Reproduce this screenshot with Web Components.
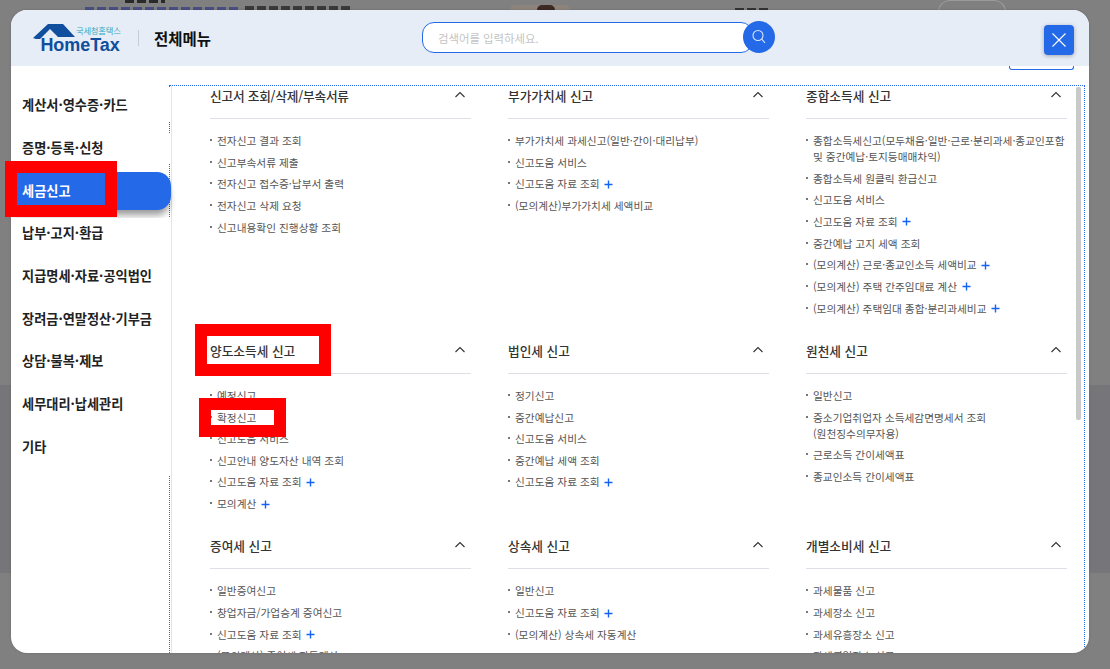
<!DOCTYPE html>
<html lang="ko"><head><meta charset="utf-8"><title>전체메뉴</title>
<style>
html,body{margin:0;padding:0;height:669px;overflow:hidden;background:#808080}
body{font-family:"Noto Sans CJK KR","Noto Sans",sans-serif}
</style></head><body>
<ht-app>
<ht-section slot="s" heading="신고서 조회/삭제/부속서류" style="--ls:-.22px"><ht-item>전자신고 결과 조회</ht-item><ht-item>신고부속서류 제출</ht-item><ht-item>전자신고 접수증·납부서 출력</ht-item><ht-item>전자신고 삭제 요청</ht-item><ht-item>신고내용확인 진행상황 조회</ht-item></ht-section>
<ht-section slot="s" heading="부가가치세 신고"><ht-item>부가가치세 과세신고(일반·간이·대리납부)</ht-item><ht-item>신고도움 서비스</ht-item><ht-item plus>신고도움 자료 조회</ht-item><ht-item>(모의계산)부가가치세 세액비교</ht-item></ht-section>
<ht-section slot="s" heading="종합소득세 신고"><ht-item>종합소득세신고(모두채움·일반·근로·분리과세·종교인포함<br>및 중간예납·토지등매매차익)</ht-item><ht-item>종합소득세 원클릭 환급신고</ht-item><ht-item>신고도움 서비스</ht-item><ht-item plus>신고도움 자료 조회</ht-item><ht-item>중간예납 고지 세액 조회</ht-item><ht-item plus>(모의계산) 근로·종교인소득 세액비교</ht-item><ht-item plus>(모의계산) 주택 간주임대료 계산</ht-item><ht-item plus>(모의계산) 주택임대 종합·분리과세비교</ht-item></ht-section>
<ht-section slot="s" heading="양도소득세 신고"><ht-item>예정신고</ht-item><ht-item>확정신고</ht-item><ht-item>신고도움 서비스</ht-item><ht-item>신고안내 양도자산 내역 조회</ht-item><ht-item plus>신고도움 자료 조회</ht-item><ht-item plus>모의계산</ht-item></ht-section>
<ht-section slot="s" heading="법인세 신고"><ht-item>정기신고</ht-item><ht-item>중간예납신고</ht-item><ht-item>신고도움 서비스</ht-item><ht-item>중간예납 세액 조회</ht-item><ht-item plus>신고도움 자료 조회</ht-item></ht-section>
<ht-section slot="s" heading="원천세 신고"><ht-item>일반신고</ht-item><ht-item>중소기업취업자 소득세감면명세서 조회<br>(원천징수의무자용)</ht-item><ht-item>근로소득 간이세액표</ht-item><ht-item>종교인소득 간이세액표</ht-item></ht-section>
<ht-section slot="s" heading="증여세 신고"><ht-item>일반증여신고</ht-item><ht-item>창업자금/가업승계 증여신고</ht-item><ht-item plus>신고도움 자료 조회</ht-item><ht-item>(모의계산) 증여세 자동계산</ht-item></ht-section>
<ht-section slot="s" heading="상속세 신고"><ht-item>일반신고</ht-item><ht-item plus>신고도움 자료 조회</ht-item><ht-item>(모의계산) 상속세 자동계산</ht-item></ht-section>
<ht-section slot="s" heading="개별소비세 신고"><ht-item>과세물품 신고</ht-item><ht-item>과세장소 신고</ht-item><ht-item>과세유흥장소 신고</ht-item><ht-item>과세영업장소 신고</ht-item></ht-section>
</ht-app>
<script>
class HtItem extends HTMLElement{
 constructor(){super();this.attachShadow({mode:'open'}).innerHTML=`<style>
 :host{display:block;position:relative;padding-left:7px;font-size:10.7px;line-height:16px;color:#555;margin-bottom:5.67px;white-space:nowrap}
 :host::before{content:"";position:absolute;left:0;top:6px;width:2px;height:2px;background:#777}
 svg{display:none;width:9px;height:9px;margin-left:4.5px;vertical-align:-.5px}
 :host([plus]) svg{display:inline-block}
 </style><slot></slot><svg viewBox="0 0 9 9"><path d="M4.5 .5v8M.5 4.5h8" stroke="#1462f5" stroke-width="1.4" fill="none"/></svg>`;}
}
customElements.define('ht-item',HtItem);
class HtSection extends HTMLElement{
 constructor(){super();this.attachShadow({mode:'open'}).innerHTML=`<style>
 :host{display:block;min-width:0}
 header{height:33px;border-bottom:1px solid #dfdfe8;display:flex;justify-content:space-between;align-items:flex-start}
 h3{margin:1px 0 0;font-size:12.7px;letter-spacing:var(--ls,0);line-height:20px;font-weight:500;color:#333}
 svg{width:12px;height:7px;margin:6px 5px 0 0}
 .list{padding-top:14px}
 </style><header><h3></h3><svg viewBox="0 0 12 7"><path d="M1.5 6L6 1.5 10.5 6" fill="none" stroke="#333" stroke-width="1.1"/></svg></header><div class="list"><slot></slot></div>`;
 this.shadowRoot.querySelector('h3').textContent=this.getAttribute('heading');}
}
customElements.define('ht-section',HtSection);
class HtNav extends HTMLElement{
 constructor(){super();const t=s=>`<div class="i">${s}</div>`;this.attachShadow({mode:'open'}).innerHTML=`<style>
 :host{display:block;width:159px;flex:none;position:relative;z-index:2;padding-top:22px;font-size:13.2px;font-weight:700;color:#222}
 .i{padding-left:11px;background:#fff;height:33px;line-height:33px;white-space:nowrap}
 .a{height:38px;margin:9px -1px 8px 0;background:#2469e8;color:#fff;line-height:37px;border-radius:0 14px 14px 0;box-shadow:0 7px 7px -2px rgba(0,0,0,.4);padding-left:11px}
 .g1{height:12px;background:transparent}.w{background:#fff}
 .w .i{height:42.8px;line-height:29px}
 .first{height:33px;line-height:34px}.sec{height:30px;line-height:30px}
 </style>
 <div class="i first">계산서·영수증·카드</div><div class="g1"></div><div class="i sec">증명·등록·신청</div>
 <div class="a">세금신고</div>
 <div class="w">${['납부·고지·환급','지급명세·자료·공익법인','장려금·연말정산·기부금','상담·불복·제보','세무대리·납세관리','기타'].map(t).join('')}</div>`;}
}
customElements.define('ht-nav',HtNav);
class HtHeader extends HTMLElement{
 constructor(){super();this.attachShadow({mode:'open'}).innerHTML=`<style>
 :host{display:flex;align-items:center;height:56px;flex:none;background:#e6edf7;position:relative;z-index:3}
 .logo{position:relative;width:90px;height:30px;margin-left:21px;flex:none}
 .logo svg{position:absolute;left:0;top:0;width:50px;height:27px}
 .small{position:absolute;left:44px;top:2px;font-size:8.3px;line-height:10px;color:#38a8c0;letter-spacing:-.2px;white-space:nowrap}
 .big{position:absolute;left:8.4px;top:11px;font:700 18px/22px "Liberation Sans",sans-serif;color:#0f4f9e;white-space:nowrap;letter-spacing:-.05px}
 .div{width:1px;height:16px;background:#c8ccd4;margin:0 15px 0 16px;flex:none}
 .t{font-size:15.5px;font-weight:700;color:#111;width:269px;flex:none;line-height:20px}
 .search{position:relative;width:331px;height:31px;box-sizing:border-box;border:1px solid #2469e8;border-radius:12px;background:#fff;display:flex;align-items:center;padding-left:15px;font-size:11.4px;color:#c4c4c4;flex:none;margin-left:-1px;margin-top:-1px}
 .btn{position:absolute;right:-23px;top:-2px;width:32px;height:32px;border-radius:50%;background:#2469e8;display:flex;align-items:center;justify-content:center}
 .x{margin-left:auto;margin-right:15px;width:30px;height:30px;border-radius:4px;background:#2469e8;box-shadow:0 1px 4px rgba(0,0,0,.3);display:flex;align-items:center;justify-content:center;flex:none;margin-top:4px}
 </style>
 <div class="logo"><svg viewBox="0 0 50 27"><path d="M1 15L16 1h15l12 13H26L18 6 8 16H4z" fill="#0f4f9e"/></svg><span class="small">국세청홈택스</span><span class="big">HomeTax</span></div>
 <div class="div"></div><div class="t">전체메뉴</div>
 <div class="search">검색어를 입력하세요.<div class="btn"><svg width="18" height="18" viewBox="0 0 18 18"><circle cx="8" cy="7.5" r="5" fill="none" stroke="#dbe6fb" stroke-width="1.1"/><path d="M11.7 11.2L15 14.8" stroke="#dbe6fb" stroke-width="1.1"/></svg></div></div>
 <div class="x"><svg width="16" height="16" viewBox="0 0 16 16"><path d="M1.5 1.5l13 13M14.5 1.5l-13 13" stroke="#fff" stroke-width="1.1"/></svg></div>`;}
}
customElements.define('ht-header',HtHeader);
class HtApp extends HTMLElement{
 constructor(){super();const tx=c=>`repeating-linear-gradient(90deg,${c} 0 9px,transparent 9px 12px)`;this.attachShadow({mode:'open'}).innerHTML=`<style>
 :host{display:block;position:relative;width:1110px;height:669px;overflow:hidden;background:#808080;box-sizing:border-box;padding:10px 21px 16px 11px}
 .bg{position:absolute}
 .modal{position:relative;height:100%;background:#fff;border-radius:16px;overflow:hidden;display:flex;flex-direction:column;box-shadow:0 0 3px rgba(0,0,0,.15)}
 .body{flex:1;min-height:0;display:flex;position:relative}
 .peek{position:absolute;top:0;right:15px;width:65px;height:4px;box-sizing:border-box;border:1px solid #2469e8;border-top:0;border-radius:0 0 3px 3px}
 .main{flex:1;min-width:0;margin-left:1px;border-left:1px solid #e2e2f2;margin-top:19px;padding:0 20px 0 38px}
 .grid{display:grid;grid-template-columns:repeat(3,261px);column-gap:37px;row-gap:17.6px}
 .dot{position:absolute;left:158px;top:19px;right:4px;bottom:-20px;border:1px dotted #2469e8;pointer-events:none}
 .thumb{position:absolute;left:1065px;top:21px;width:5px;height:333px;background:#c9c9c9;border-radius:2px}
 .red{position:absolute;box-sizing:border-box;border:12px solid #f00;z-index:9}
 </style>
 <div class="bg" style="left:0;right:0;top:385px;height:188px;background:#76767a"></div>
 <div class="bg" style="left:125px;top:0;width:40px;height:3px;background:${tx('#2a2a2a')}"></div>
 <div class="bg" style="left:85px;top:7px;width:155px;height:3px;background:${tx('#4a4f82')}"></div>
 <div class="bg" style="left:245px;top:6px;width:105px;height:4px;background:${tx('#3a3a3a')}"></div>
 <div class="bg" style="left:510px;top:5px;width:60px;height:5px;background:#8d847d;border-radius:6px 6px 0 0"></div>
 <div class="bg" style="left:537px;top:5px;width:18px;height:5px;background:#3d2a22;border-radius:8px 8px 0 0"></div>
 <div class="bg" style="left:735px;top:8px;width:36px;height:2px;background:${tx('#333')}"></div>
 <div class="bg" style="left:938px;top:0;width:68px;height:12px;box-sizing:border-box;border:1px solid #9a9a9a;border-radius:20px 20px 0 0"></div>
 <div class="modal"><ht-header></ht-header>
 <div class="body"><ht-nav></ht-nav><div class="main"><div class="grid"><slot name="s"></slot></div></div>
 <div class="peek"></div><div class="dot"></div><div class="thumb"></div></div></div>
 <div class="red" style="left:5px;top:161px;width:112px;height:56px"></div>
 <div class="red" style="left:195px;top:324px;width:136px;height:52px"></div>
 <div class="red" style="left:199px;top:398px;width:87px;height:39px"></div>`;}
}
customElements.define('ht-app',HtApp);
</script></body></html>
